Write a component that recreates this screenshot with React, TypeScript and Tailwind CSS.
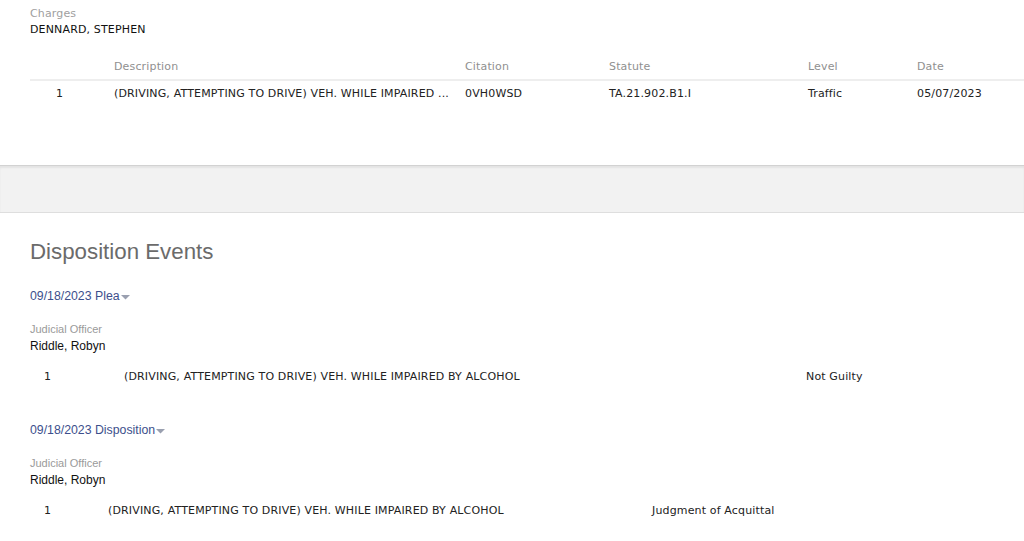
import React from "react";

const tableFont = { fontFamily: '"DejaVu Sans", Verdana, sans-serif' };

type Event = {
  title: string;
  officer: string;
  desc: string;
  result: string;
  numCol: string;
  descCol: string;
};

const events: Event[] = [
  {
    title: "09/18/2023 Plea",
    officer: "Riddle, Robyn",
    desc: "(DRIVING, ATTEMPTING TO DRIVE) VEH. WHILE IMPAIRED BY ALCOHOL",
    result: "Not Guilty",
    numCol: "w-[94px] pl-[14px]",
    descCol: "w-[682px]",
  },
  {
    title: "09/18/2023 Disposition",
    officer: "Riddle, Robyn",
    desc: "(DRIVING, ATTEMPTING TO DRIVE) VEH. WHILE IMPAIRED BY ALCOHOL",
    result: "Judgment of Acquittal",
    numCol: "w-[78px] pl-[14px]",
    descCol: "w-[544px]",
  },
];

function Caret() {
  return (
    <svg width="9" height="5" viewBox="0 0 9 5" className="ml-[1px] mt-[2px]">
      <path d="M0 0 L9 0 L4.5 4.5 Z" fill="#9aa0b0" />
    </svg>
  );
}

export default function App() {
  return (
    <div className="w-[1024px] h-[541px] overflow-hidden bg-white">
      {/* Charges */}
      <div className="pl-[30px] pt-[7px] h-[165px] tracking-[0.15px]" style={tableFont}>
        <div className="text-[11px] leading-[14px] text-[#a0a0a0]">Charges</div>
        <div className="text-[11px] leading-[14px] text-[#111] mt-[2px]">DENNARD, STEPHEN</div>

        <div className="mt-[19px] text-[11px]">
          <div className="flex h-[25px] items-center border-b-2 border-[#eeeeee] text-[#909090]">
            <div className="w-[84px]" />
            <div className="w-[351px]">Description</div>
            <div className="w-[144px]">Citation</div>
            <div className="w-[199px]">Statute</div>
            <div className="w-[109px]">Level</div>
            <div>Date</div>
          </div>
          <div className="flex h-[26px] items-center text-[#222]">
            <div className="w-[84px] pl-[26px]">1</div>
            <div className="w-[351px]">(DRIVING, ATTEMPTING TO DRIVE) VEH. WHILE IMPAIRED ...</div>
            <div className="w-[144px]">0VH0WSD</div>
            <div className="w-[199px]">TA.21.902.B1.I</div>
            <div className="w-[109px]">Traffic</div>
            <div>05/07/2023</div>
          </div>
        </div>
      </div>

      {/* Separator band */}
      <div className="h-[48px] bg-[#f2f2f2] border-t border-[#d2d2d2] border-b border-b-[#dedede] shadow-[inset_0_2px_2px_rgba(0,0,0,0.06)]" />

      {/* Disposition Events */}
      <div className="pl-[30px] pt-[26px]" style={{ fontFamily: '"Liberation Sans", Arial, sans-serif' }}>
        <h2 className="text-[22.3px] leading-[26px] text-[#6b6b6b]">Disposition Events</h2>

        <div className="mt-[23px] flex flex-col gap-[38px]">
          {events.map((e) => (
            <div key={e.title}>
              <div className="flex items-center text-[12.3px] leading-[16px] text-[#3d4f8c]">
                {e.title}
                <Caret />
              </div>
              <div className="mt-[18px] text-[11px] leading-[14px] text-[#9a9a9a]">Judicial Officer</div>
              <div className="mt-[2px] text-[12px] leading-[16px] text-[#111]">{e.officer}</div>
              <div
                className="flex mt-[16px] text-[11px] leading-[14px] tracking-[0.15px] text-[#222]"
                style={tableFont}
              >
                <div className={e.numCol}>1</div>
                <div className={e.descCol}>{e.desc}</div>
                <div>{e.result}</div>
              </div>
            </div>
          ))}
        </div>
      </div>
    </div>
  );
}
